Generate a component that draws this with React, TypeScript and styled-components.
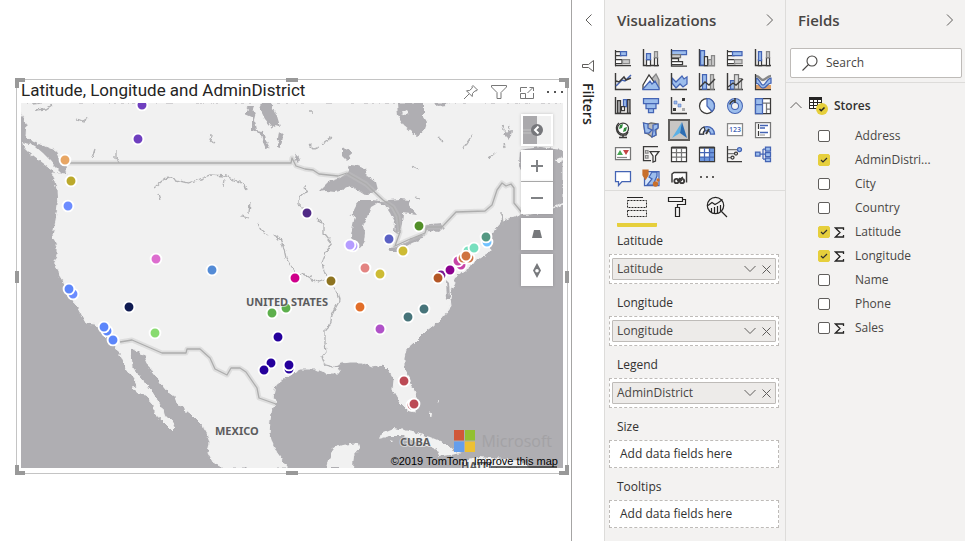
import React from "react";
import styled, { createGlobalStyle, css } from "styled-components";

const GlobalStyle = createGlobalStyle`
  * { box-sizing: border-box; }
  body { margin: 0; background: #fff; color: #323130; font-family: "Open Sans", "Noto Sans", sans-serif; font-size: 12px; }
  button { border: 0; padding: 0; background: none; color: inherit; font: inherit; }
  svg { display: block; flex: none; }
`;

const Page = styled.div`
  display: grid;
  grid-template-columns: minmax(0, 1fr) 33px 181px 180px;
  min-height: 100vh;
`;

/* ---------- report canvas ---------- */

const Canvas = styled.main`
  padding: 79px 3px 20px 16px;
`;
const Visual = styled.section`
  position: relative;
  border: 1px solid #c4c4c4;
  padding: 0 4px 5px;
`;
const VisualHeader = styled.header`
  display: flex;
  align-items: center;
  height: 23px;
`;
const VisualTitle = styled.h1`
  flex: 1;
  margin: 0;
  font: 400 17px/18px Roboto, sans-serif;
  color: #252423;
  white-space: nowrap;
  padding-bottom: 4px;
`;
const HeaderActions = styled.div`
  display: flex;
  gap: 12px;
  color: #777;
`;
const IconButton = styled.button`
  display: flex;
  align-items: center;
  justify-content: center;
  min-width: 16px;
  height: 16px;
`;

type Spot = "tl" | "t" | "tr" | "l" | "r" | "bl" | "b" | "br";
const spots: Record<Spot, ReturnType<typeof css>> = {
  tl: css`top: -2px; left: -2px; width: 10px; height: 10px; border-width: 4px 0 0 4px;`,
  tr: css`top: -2px; right: -2px; width: 10px; height: 10px; border-width: 4px 4px 0 0;`,
  bl: css`bottom: -2px; left: -2px; width: 10px; height: 10px; border-width: 0 0 4px 4px;`,
  br: css`bottom: -2px; right: -2px; width: 10px; height: 10px; border-width: 0 4px 4px 0;`,
  t: css`top: -2px; left: calc(50% - 6px); width: 12px; border-width: 4px 0 0;`,
  b: css`bottom: -2px; left: calc(50% - 6px); width: 12px; border-width: 4px 0 0;`,
  l: css`left: -2px; top: calc(50% - 6px); height: 12px; border-width: 0 0 0 4px;`,
  r: css`right: -2px; top: calc(50% - 6px); height: 12px; border-width: 0 0 0 4px;`,
};
const Handle = styled.span<{ $at: Spot }>`
  position: absolute;
  border: 0 solid #999;
  ${(p) => spots[p.$at]}
`;

const MapArea = styled.div`
  position: relative;
  aspect-ratio: 542 / 365;
  overflow: hidden;
  background: #afaeb2;
`;
const MapSvg = styled.svg`
  width: 100%;
  height: 100%;
`;
const MapControls = styled.div`
  position: absolute;
  top: 11px;
  right: 10px;
  width: 32px;
  display: flex;
  flex-direction: column;
  gap: 4px;
`;
const MapButton = styled.button<{ $divided?: boolean }>`
  display: flex;
  align-items: center;
  justify-content: center;
  width: 32px;
  height: 32px;
  background: #fff;
  box-shadow: 0 0 3px rgba(0, 0, 0, 0.18);
  border-bottom: ${(p) => (p.$divided ? "1px solid #b5b5b5" : "0")};
`;
const ZoomGroup = styled.div`
  display: flex;
  flex-direction: column;
  background: #fff;
`;
const Brand = styled.div`
  position: absolute;
  right: 11px;
  bottom: 16px;
  display: flex;
  align-items: center;
  gap: 6px;
  color: #a3a2a5;
  font-size: 16px;
  line-height: 22px;
`;
const Credits = styled.div`
  position: absolute;
  right: 5px;
  bottom: 0;
  font: 11px/14px "Liberation Sans", sans-serif;
  color: #000;
  white-space: nowrap;
`;
const CreditLink = styled.a`
  color: inherit;
  text-decoration: none;
  margin-left: 6px;
`;

const lakes = [
  "M262 103L271 103 274 110 277 117 280 127 276 126 272 128 270 125 265 119 262 113 260 108Z",
  "M279 131L283 135 282 142 280 148 277 147 278 138Z",
  "M246 106L253 106 252 110 256 112 254 120 256 130 263 131 265 139 270 148 266 149 263 142 261 134 252 130 252 117 245 114 249 110Z",
  "M397 103L424 103 424 117 427 122 425 128 420 134 418 137 412 132 404 125 398 116Z",
  "M434 103L450 103 446 105 438 106Z",
  "M342 149L348 148 351 152 350 158 347 161 342 156Z",
  "M296 152L300 160 298 163 295 160Z",
  "M318 192L328 182 340 178 347 173 350 165 358 166 365 169 367 175 376 182 378 190 371 193 365 195 357 190 350 186 342 190 335 192 326 191Z",
  "M356 206L361 200 372 200 380 201 389 200 400 199 410 200 408 204 411 208 417 215 410 214 403 213 402 224 399 234 394 232 395 222 390 212 386 206 378 203 371 207 367 217 363 225 365 233 364 241 361 246 358 248 354 244 351 236 353 225 355 216 350 217 354 210Z",
  "M388 248L396 247 404 243 414 238 425 234 422 239 412 243 405 247 396 252 390 252Z",
  "M424 226L430 224 442 223 444 228 440 232 427 231Z",
  "M504 132L512 130 511 137 508 139 503 134Z",
  "M520 150L540 147 563 150 563 203 553 207 540 205 530 190 519 166Z",
  "M446 280L449 283 450 297 447 300Z",
];

const islands = [
  "M22 142L30 144 36 147 43 153 50 160 54 165 62 173 54 172 46 166 38 160 30 154 24 148Z",
  "M379 439L383 433 395 428 413 432 430 437 440 441 447 445 453 450 462 453 450 455 437 457 440 452 430 447 420 445 413 440 403 436 390 436Z",
  "M327 468L330 456 333 448 342 445 359 443 360 448 354 455 353 468Z",
  "M468 459L478 457 490 458 505 459 520 461 532 468 478 468 462 466Z",
  "M400 113L407 111 409 114 405 115Z",
  "M430 412L433 416 430 417Z",
  "M390 440L394 441 392 443Z",
  "M555 160L563 156 563 161 557 163Z",
  "M438 399L439 401 438 403Z",
];

const rivers = [
  "M32 104L40 103M36 110L46 109 52 105",
  "M77 119L83 121 88 118M95 149L92 158M116 150L116 158 118 163",
  "M154 188L162 181 169 176 175 180 188 183 200 179 210 175 226 176 236 181 244 184 246 191M224 179L223 187M250 202L249 214M242 216L249 218",
  "M257 223L261 230 268 236M273 235L281 240 284 249 286 258 292 268 297 275 304 274 312 279 319 282 325 280",
  "M305 186L306 192 299 198 299 205 306 210M318 219L324 225 324 234 332 244 326 252 322 262 324 272 329 278 332 286 338 292 340 300 336 307 332 315 330 325 325 330 325 343 326 352 322 357 325 365 333 367",
  "M309 112L314 112M309 144L314 149 319 147M322 144L332 137M211 134L210 140 214 143",
  "M463 149L466 144 473 134M502 125L505 132M510 125L508 131M505 148L504 143M439 138L443 142M489 158L495 153M502 212L503 228",
  "M415 197L420 199M158 194L160 200M412 166L419 169M391 205L394 212 398 225",
];

const usCanada =
  "M68 163L291 163 292 158 296 166 305 169 313 170 319 174 338 176 347 173 366 184 383 200 393 207 398 216 400 232 395 246 408 240 425 233 427 227 442 227 456 212 485 211 492 205 497 190 502 183 506 186 511 184 514 188 514 203 523 214";
const usMexico =
  "M120 342L132 340 162 353 186 353 187 349 200 349 210 358 215 369 227 375 231 368 240 368 246 372 257 388 259 398 276 404";

const land =
  "M21 103L563 103 563 150 563 204 553 208 545 212 530 214 517 215 503 220 496 228 490 235 489 242 491 250 487 253 473 262 470 267 462 272 453 277 455 283 451 291 450 299 451 307 447 312 440 320 427 330 415 342 406 350 404 358 404 366 408 377 415 393 417 402 415 411 407 409 400 402 393 390 394 380 390 372 383 365 372 367 362 362 350 362 342 363 332 367 338 368 340 373 327 373 317 369 300 369 287 376 280 381 275 385 273 395 277 403 272 407 270 420 269 433 272 443 277 453 283 461 288 468 223 468 213 462 208 453 210 443 207 433 202 425 190 413 177 403 175 397 167 391 162 385 157 378 152 372 147 362 145 355 134 349 131 350 132 367 140 377 147 385 152 392 157 400 163 410 165 418 170 418 175 427 172 430 162 420 154 413 154 405 143 393 138 393 132 388 138 387 135 380 126 368 122 358 117 349 110 340 98 328 95 324 86 323 80 312 75 303 72 297 65 285 60 277 59 270 54 262 57 255 57 247 53 236 56 220 58 205 57 190 55 182 52 173 66 174 68 176 66 165 60 158 57 150 50 148 40 144 30 139 26 136 27 125 22 114 21 110Z";

const stops: [number, number, string][] = [
  [142, 105, "#6f3fbf"], [138, 139, "#6f3fbf"], [65, 160, "#e8a664"], [71, 181, "#bba92c"], [68, 206, "#6c8cff"],
  [73, 294, "#6c8cff"], [69, 289, "#5c86fb"], [107, 331, "#5c86fb"], [104, 327, "#5c86fb"], [113, 340, "#5c86fb"],
  [156, 259, "#dd6dcf"], [212, 270, "#548bd6"], [129, 307, "#101b52"], [155, 333, "#89db70"],
  [307, 213, "#502a86"], [353, 246, "#b59cff"], [350, 245, "#b59cff"], [389, 239, "#5b61c4"], [295, 278, "#cf008b"],
  [331, 281, "#8e7421"], [365, 268, "#e38482"], [380, 274, "#cdbb34"], [360, 307, "#e26e29"], [380, 329, "#b052c8"],
  [286, 308, "#5daf4c"], [272, 313, "#5daf4c"], [278, 337, "#25009c"], [271, 363, "#25009c"], [264, 370, "#25009c"],
  [289, 369, "#25009c"], [289, 365, "#25009c"], [412, 405, "#bc4a55"], [414, 404, "#bc4a55"], [404, 381, "#bc4a55"],
  [408, 317, "#47747a"], [424, 309, "#47747a"], [441, 275, "#7a1c92"], [438, 278, "#b45726"], [450, 270, "#8b008f"],
  [461, 265, "#c744a7"], [458, 261, "#c744a7"], [469, 258, "#cf7341"], [463, 258, "#cf7341"], [468, 251, "#77dfbe"],
  [466, 256, "#cf7341"], [474, 248, "#77dfbe"], [487, 242, "#70c2ff"], [486, 237, "#559983"],
  [419, 226, "#528f28"], [403, 251, "#cdbb34"],
];

function StoreMap() {
  return (
    <MapSvg viewBox="21 103 542 365" preserveAspectRatio="xMidYMid slice" role="img" aria-label="Store locations">
      <defs>
        <filter id="coast" x="-5%" y="-5%" width="110%" height="110%" colorInterpolationFilters="sRGB">
          <feTurbulence type="fractalNoise" baseFrequency="0.2" numOctaves="2" seed="4" result="noise" />
          <feDisplacementMap in="SourceGraphic" in2="noise" scale="5" xChannelSelector="R" yChannelSelector="G" />
        </filter>
      </defs>
      <rect x="21" y="103" width="542" height="365" fill="#afaeb2" />
      <g filter="url(#coast)">
        <path d={land} fill="#f1f1f1" stroke="#f1f1f1" strokeWidth="1" />
        {lakes.map((d) => <path key={d} d={d} fill="#afaeb2" />)}
        {islands.map((d) => <path key={d} d={d} fill="#f1f1f1" />)}
        {rivers.map((d) => <path key={d} d={d} fill="none" stroke="#b1b1b3" strokeWidth="1.3" />)}
      </g>
      <path d="M21 103V112M563 103V150" stroke="#f1f1f1" strokeWidth="5" />
      {[usCanada, usMexico].map((d) => (
        <g key={d} fill="none" strokeLinejoin="round">
          <path d={d} stroke="#c4c4c4" strokeOpacity=".4" strokeWidth="5" />
          <path d={d} stroke="#adadad" strokeWidth="1.3" />
        </g>
      ))}
      {stops.map(([x, y, color], i) => (
        <circle key={i} cx={x} cy={y} r="5.4" fill={color} stroke="#fff" strokeWidth="1.9" />
      ))}
      <g fontFamily="Noto Sans, sans-serif" fontSize="11" fontWeight="700" fill="#5c5c5e" stroke="#f1f1f1" strokeOpacity=".6" strokeWidth="2" paintOrder="stroke">
        <text x="246" y="306">UNITED STATES</text>
        <text x="215" y="435">MEXICO</text>
        <text x="400" y="446">CUBA</text>
        <text x="461" y="470">HAITI</text>
      </g>
      <path d="M491 467H557" stroke="#333" strokeWidth="1.5" />
    </MapSvg>
  );
}

/* ---------- side panes ---------- */

const FiltersPane = styled.aside`
  display: flex;
  flex-direction: column;
  align-items: center;
  border-left: 1px solid #a6a5a4;
  padding-top: 12px;
  background: #fff;
`;
const FunnelSlot = styled.span`
  margin-top: 32px;
`;
const FiltersLabel = styled.h2`
  writing-mode: vertical-rl;
  margin: 11px 0 0;
  font-size: 14px;
  line-height: 18px;
  font-weight: 600;
  color: #252423;
`;
const Pane = styled.aside`
  min-width: 0;
  background: #f3f2f1;
  border-left: 1px solid #dddcda;
`;
const PaneHeader = styled.header`
  display: flex;
  align-items: center;
  justify-content: space-between;
  height: 40px;
  padding: 0 8px 0 12px;
`;
const PaneTitle = styled.h2`
  margin: 0;
  font-size: 15px;
  line-height: 20px;
  font-weight: 600;
  color: #484644;
`;
const Gallery = styled.div`
  display: grid;
  grid-template-columns: repeat(6, 28px);
  grid-auto-rows: 24px;
  padding: 6px 4px 0;
`;
const Tile = styled.button<{ $active?: boolean }>`
  place-self: center;
  display: grid;
  place-items: center;
  width: 22px;
  height: 22px;
  ${(p) => p.$active && css`background: #c8c6c4; border: 2px solid #605e5c;`}
`;
const Tabs = styled.nav`
  display: flex;
  border-top: 1px solid #dddcda;
  padding-left: 12px;
`;
const Tab = styled.button<{ $active?: boolean }>`
  width: 40px;
  height: 36px;
  display: grid;
  place-items: center;
  border-bottom: 4px solid ${(p) => (p.$active ? "#e6cf3c" : "transparent")};
  border-radius: 1px;
`;
const Wells = styled.div`
  display: flex;
  flex-direction: column;
  gap: 8px;
  padding: 3px 6px 0 4px;
`;
const WellLabel = styled.h3`
  margin: 0;
  padding: 0 8px 2px;
  font-size: 12px;
  font-weight: 400;
  line-height: 22px;
`;
const DropZone = styled.div`
  border: 1px dashed #bebbb8;
  background: #fff;
  padding: 3px 2px;
`;
const Placeholder = styled.div`
  padding: 0 8px;
  line-height: 20px;
`;
const Pill = styled.div`
  display: flex;
  align-items: center;
  gap: 6px;
  height: 22px;
  padding: 0 4px;
  border: 1px solid #bebbb8;
  border-radius: 1px;
  background: #edebe9;
  color: #605e5c;
`;
const PillText = styled.span`
  flex: 1;
  line-height: 20px;
  color: #484644;
`;
const PillButton = styled.button`
  display: grid;
  place-items: center;
`;
const SearchBox = styled.label`
  display: flex;
  align-items: center;
  gap: 8px;
  height: 30px;
  margin: 8px 3px 4px 4px;
  padding: 0 11px;
  background: #fff;
  border: 1px solid #bebbb8;
  border-radius: 2px;
`;
const SearchInput = styled.input`
  min-width: 0;
  flex: 1;
  border: 0;
  padding: 0;
  outline: 0;
  background: none;
  font: 12px/18px "Open Sans", sans-serif;
  color: #323130;
  &::placeholder { color: #484644; opacity: 1; }
`;
const TableButton = styled.button`
  display: flex;
  align-items: center;
  gap: 6px;
  height: 24px;
  padding-left: 4px;
  font-weight: 600;
`;
const FieldTree = styled.section`
  border-top: 1px solid #dddcda;
  padding-top: 10px;
`;
const FieldList = styled.ul`
  list-style: none;
  margin: 7px 0 0;
  padding: 0 0 0 32px;
`;
const FieldRow = styled.label`
  display: grid;
  grid-template-columns: 12px 11px minmax(0, 1fr);
  column-gap: 4px;
  align-items: center;
  height: 24px;
`;
const FieldName = styled.span`
  padding-left: 6px;
  line-height: 20px;
  color: #484644;
`;
const CheckWrap = styled.span`
  position: relative;
  width: 12px;
  height: 12px;
`;
const Check = styled.input`
  appearance: none;
  display: block;
  width: 12px;
  height: 12px;
  margin: 0;
  background: #fff;
  border: 1px solid #605e5c;
  border-radius: 2px;
  &:checked { background: #e6cf3c; border-color: #e6cf3c; }
  & + svg { position: absolute; top: 0; left: 0; pointer-events: none; visibility: hidden; }
  &:checked + svg { visibility: visible; }
`;

/* ---------- icons ---------- */

const K = "#3b3a39";
const B = "#9cbdec";
const D = "#4464b4";
const G = "#a5a5a5";

function Chevron({ d, w = 9, h = 14 }: { d: string; w?: number; h?: number }) {
  return (
    <svg width={w} height={h} viewBox={`0 0 ${w} ${h}`} fill="none" stroke="#605e5c" strokeWidth="1">
      <path d={d} />
    </svg>
  );
}

const axis = <path d="M1.5 0V16.5H17" stroke={K} strokeWidth="1.4" />;

const gallery: [string, React.ReactNode][] = [
  ["Stacked bar chart", <><path d="M1.5 1V17M1 16.5H2" stroke={K} /><path d="M2 2.5H7V6.5H2" stroke={K} /><path d="M6.5 2.5H12.5V6.5H6.5Z" fill={B} stroke={D} /><path d="M2 10.5H8V14.5H2M1 16.5H17" stroke={K} fill="#fff" /><path d="M8.5 10.5H15.5V14.5H8.5Z" fill="#ccc" stroke="#888" /></>],
  ["Stacked column chart", <>{axis}<path d="M4.5 10.5H8.5V16.5H4.5Z" fill="#fff" stroke={K} /><path d="M4.5 4.5H8.5V10.5H4.5Z" fill={B} stroke={D} /><path d="M12.5 8.5H15.5V16.5H12.5Z" fill="#fff" stroke={K} /><path d="M12.5 2.5H15.5V8.5H12.5Z" fill="#ccc" stroke="#888" /></>],
  ["Clustered bar chart", <><path d="M1.5 1.5H16.5V5.5H1.5Z" fill={B} stroke={D} /><path d="M1.5 5.5H10.5V8.5H1.5Z" fill="#ccc" stroke="#777" /><path d="M1.5 9.5H8.5V12.5H1.5M1.5 12.5H12.5V15.5H1.5" fill="#fff" stroke={K} /><path d="M1.5 0V17H17" stroke={K} /></>],
  ["Clustered column chart", <>{axis}<path d="M2.5 1.5H6.5V16H2.5Z" fill={B} stroke={D} /><path d="M6.5 7.5H9.5V16.5H6.5Z" fill="#fff" stroke={K} /><path d="M10.5 10.5H13.5V16.5H10.5ZM13.5 6.5H16.5V16.5H13.5Z" fill="#ccc" stroke="#888" /></>],
  ["100% stacked bar chart", <><path d="M1.5 1V16.5H17" stroke={K} /><path d="M2 2.5H8V6.5H2M2 10.5H9V14.5H2" stroke={K} fill="#fff" /><path d="M6.5 2.5H16V6.5H6.5Z" fill={B} stroke={D} /><path d="M8.5 10.5H16V14.5H8.5Z" fill="#ccc" stroke="#888" /></>],
  ["100% stacked column chart", <>{axis}<path d="M4.5 10.5H7.5V16.5H4.5ZM12.5 8.5H15.5V16.5H12.5Z" fill="#fff" stroke={K} /><path d="M4.5 2.5H7.5V11.5H4.5Z" fill={B} stroke={D} /><path d="M12.5 2.5H15.5V8.5H12.5Z" fill="#ccc" stroke="#888" /></>],
  ["Line chart", <>{axis}<path d="M2 13L8 7 11 8 17 2" stroke={D} strokeWidth="1.5" /><path d="M2 8L5 9 10 4 12 7 17 5" stroke={K} strokeWidth="1.5" /></>],
  ["Area chart", <><path d="M8 8L14 1 17 7V16H10Z" fill="#bbb" stroke="#888" /><path d="M1 12L7 2 12 9 8 16H1Z" fill="#fff" stroke={K} /><path d="M1 16L8 8 10 11 13 8 17 15V16.5H1Z" fill={B} stroke={D} /></>],
  ["Stacked area chart", <><path d="M2 5L6 9 12 3 14 6 17 4V11L13 14 10 11 6 15 2 10Z" fill={B} stroke={D} />{axis}</>],
  ["Line and stacked column chart", <>{axis}<path d="M4.5 1.5H8.5V16H4.5Z" fill={B} stroke={D} /><path d="M12.5 1.5H15.5V16H12.5Z" fill="#ccc" stroke="#888" /><path d="M2 14L7 9 11 12 17 6" stroke={K} strokeWidth="1.4" /></>],
  ["Line and clustered column chart", <>{axis}<path d="M4.5 7.5H8.5V16H4.5Z" fill={B} stroke={D} /><path d="M8.5 1.5H12.5V16H8.5ZM12.5 5.5H15.5V16H12.5Z" fill="#ddd" stroke="#777" /><path d="M2 14L7 10 10 12 17 6" stroke={K} strokeWidth="1.4" /></>],
  ["Ribbon chart", <><path d="M2 13H6M12 13H17M2 15H17" stroke="#d8863c" strokeWidth="1.6" /><path d="M2 5C6 5 6 12 9 12S13 5 17 5V10C13 10 13 15 9 15S6 10 2 10Z" fill={B} stroke={D} /><path d="M2 3C6 3 6 7 9 7S13 3 17 3" stroke="#888" strokeWidth="2.4" /><path d="M1.5 1V16.5H17" stroke={K} /></>],
  ["Waterfall chart", <>{axis}<path d="M3.5 3.5H6.5V16H3.5ZM13.5 2.5H16V16H13.5Z" fill="#aaa" stroke={K} /><path d="M9.5 2.5H12.5V9.5H9.5Z" fill={B} stroke={D} /><path d="M7.5 9.5H10.5V13.5H7.5Z" fill="#fff" stroke={K} /></>],
  ["Funnel chart", <><path d="M1.5 1.5H16.5V6.5H1.5ZM4 6.5H14V11.5H4ZM6.5 11.5H11.5V15.5H6.5Z" fill={B} stroke={D} /></>],
  ["Scatter chart", <>{axis}<path d="M12 1H15V4H12ZM3 11H6V14H3Z" fill={K} /><path d="M4 4H7V7H4ZM8 7H11V10H8Z" fill={B} stroke={D} strokeWidth=".5" /><path d="M12 11H15V14H12Z" fill="#aaa" /></>],
  ["Pie chart", <><circle cx="9" cy="9" r="7.5" fill="#fff" stroke={K} /><path d="M9 9V1.5A7.5 7.5 0 0 1 14 14.5Z" fill={B} stroke={D} /></>],
  ["Donut chart", <><circle cx="9" cy="9" r="5.5" stroke={D} strokeWidth="5" /><circle cx="9" cy="9" r="5.5" stroke={B} strokeWidth="3" /><path d="M9 1V6M9 3.5A5.5 5.5 0 0 0 3.8 7.5" stroke={K} strokeWidth="1.5" /></>],
  ["Treemap", <><path d="M1.5 1.5H16.5V16.5H1.5Z" fill="#fff" stroke={K} /><path d="M1.5 1.5H8.5V7.5H1.5ZM1.5 7.5H8.5V16.5H1.5Z" fill={B} stroke={D} /><path d="M8.5 6H16M12.5 6V16M12.5 12H16" stroke="#777" /></>],
  ["Map", <><circle cx="9" cy="7.5" r="5.5" fill="#fff" stroke={K} /><path d="M6 4L9 3 8 7 5 8ZM10 7L13 6 12 10 9 11Z" fill="#2f8a3b" /><path d="M5 2C1 5 2 12 7 14H12L14 11M9 14V16.5M5 16.5H13" stroke={K} strokeWidth="1.5" /></>],
  ["Filled map", <><path d="M1.5 2L6 3 9 2 16 3V7L14 9V14L10 16 6 13 3 12Z" fill="#bbb" stroke="#666" /><path d="M1.5 2L6 3V7L10 9 7 12 3 12ZM11 4L16 3V7L13 9 14 14 10 16 11 10Z" fill={B} stroke={D} /></>],
  ["ArcGIS Maps", <><path d="M12 1L2 17 10 12Z" fill="#59b0e6" /><path d="M12 1L17 17 10 12Z" fill="#2c6db3" /></>],
  ["Gauge", <><path d="M1.5 13A7.5 7.5 0 0 1 16.5 13H12.5A3.5 3.5 0 0 0 5.5 13Z" fill={B} stroke={D} /><path d="M1.5 13A7.5 7.5 0 0 1 6 6L7 9A4 4 0 0 0 5.5 13Z" fill="#fff" stroke={K} /><path d="M8 13L11 8" stroke={K} strokeWidth="2" /></>],
  ["Card", <><path d="M1.5 2.5H16.5V14.5H1.5Z" fill="#fff" stroke="#888" /><text x="3" y="11" fontSize="7" fontWeight="600" fontFamily="Open Sans" fill={D} stroke="none">123</text></>],
  ["Multi-row card", <><path d="M1.5 1.5H16.5V16.5H1.5Z" fill="#fff" stroke="#777" /><path d="M4.5 3V8M4.5 10V15" stroke={K} /><path d="M6 4.5H14M6 7H11M6 11.5H14" stroke={D} strokeWidth="1.3" /><path d="M6 14H11" stroke={G} /></>],
  ["KPI", <><path d="M1.5 2.5H16.5V14.5H1.5Z" fill="#fff" stroke="#777" /><path d="M3 10L6 5 9 10Z" fill="#4aa655" /><path d="M9 5H15L12 10Z" fill="#c44545" /><path d="M3 12.5H13" stroke="#888" /></>],
  ["Slicer", <><path d="M1 1.5H16M1.5 1V15.5H9" stroke={K} /><path d="M3.5 5.5H6V8H3.5ZM3.5 10.5H6V13H3.5Z" stroke="#888" /><path d="M8 6.5H17L13.5 11V16L11 17V11Z" fill="#fff" stroke={K} /></>],
  ["Table", <><path d="M1.5 2.5H16.5V16.5H1.5Z" fill="#fff" stroke={K} /><path d="M1.5 2.5H16.5" stroke={K} strokeWidth="2" /><path d="M6.5 3V16M11.5 3V16M2 7.5H16M2 12H16" stroke="#777" /></>],
  ["Matrix", <><path d="M1.5 2.5H16.5V16.5H1.5Z" fill="#fff" stroke={K} /><path d="M11.5 3H16V16H2V12H11Z" fill="#6f98dd" /><path d="M1.5 2.5H16.5" stroke={K} strokeWidth="2" /><path d="M6.5 3V16M11.5 3V16M2 7.5H16M2 12H16" stroke={D} /></>],
  ["Key influencers", <><path d="M1.5 1V16.5H16" stroke={K} /><path d="M2 4.5H12M2 8.5H8M2 12.5H5" stroke="#777" /><circle cx="13.5" cy="4.5" r="2" fill={B} stroke={D} /><circle cx="10" cy="8.5" r="1.5" stroke={K} /><circle cx="6.5" cy="12.5" r="1.5" stroke={K} /></>],
  ["Decomposition tree", <><path d="M6 9H11M9 4V14M9 4H11M9 14H11" stroke={D} /><path d="M1.5 7H6V11H1.5Z" fill={B} stroke={D} /><path d="M11.5 2H16.5V6H11.5ZM11.5 7.5H16.5V11.5H11.5ZM11.5 13H16.5V16.5H11.5Z" fill={B} stroke={D} /></>],
  ["Q&A", <><path d="M1.5 2.5H16.5V12.5H8L4.5 16.5V12.5H1.5Z" fill="#fff" stroke={D} /></>],
  ["Map layers", <><path d="M2.5 2.5H17V16.5H2.5Z" fill="#d7e6fa" stroke={D} /><path d="M10 3L7 8 10 10 5 16H11L15 7V3Z" fill={B} stroke={D} /><path d="M1 1H6V6L3.5 10 1 6Z" fill="#c86f2c" stroke="#c86f2c" /><circle cx="13.5" cy="15" r="2.7" fill="#c86f2c" /><circle cx="16" cy="11" r="1.7" fill="#c86f2c" /></>],
  ["Custom visual", <><path d="M2 13.5V5L4 3.5H16.5V13.5" fill="#fff" stroke={K} strokeWidth="1.5" /><circle cx="6.5" cy="12" r="2.2" stroke={K} strokeWidth="1.8" /><circle cx="12" cy="12" r="2.2" stroke={K} strokeWidth="1.8" /><path d="M7 12L13 8M12 12L9 9" stroke={K} /></>],
  ["More visuals", <path d="M2 7H4V9H2ZM8 7H10V9H8ZM14 7H16V9H14Z" fill="#605e5c" />],
];

const wells: { label: string; value?: string }[] = [
  { label: "Latitude", value: "Latitude" },
  { label: "Longitude", value: "Longitude" },
  { label: "Legend", value: "AdminDistrict" },
  { label: "Size" },
  { label: "Tooltips" },
];

const fields: { name: string; checked?: boolean; sum?: boolean }[] = [
  { name: "Address" },
  { name: "AdminDistri...", checked: true },
  { name: "City" },
  { name: "Country" },
  { name: "Latitude", checked: true, sum: true },
  { name: "Longitude", checked: true, sum: true },
  { name: "Name" },
  { name: "Phone" },
  { name: "Sales", sum: true },
];

export default function App() {
  return (
    <Page>
      <GlobalStyle />
      <Canvas>
        <Visual>
          <VisualHeader>
            <VisualTitle>Latitude, Longitude and AdminDistrict</VisualTitle>
            <HeaderActions>
              <IconButton aria-label="Pin visual">
                <svg width="16" height="16" viewBox="0 0 16 16" fill="none" stroke="currentColor"><path d="M10 1.5L14.5 6 13 7 12 6.8 9.5 9.5 9.2 12.5 3.5 6.8 6.5 6.5 9.3 4 9 2.7ZM6 10L1 15" /></svg>
              </IconButton>
              <IconButton aria-label="Filters on visual">
                <svg width="16" height="16" viewBox="0 0 16 16" fill="none" stroke="currentColor"><path d="M.5 1.5H15.5V3L10 8.5V14.5H6V8.5L.5 3Z" /></svg>
              </IconButton>
              <IconButton aria-label="Focus mode">
                <svg width="16" height="16" viewBox="0 0 16 16" fill="none" stroke="currentColor"><path d="M1.5 8V3.5H8M14.5 9V14.5H1.5V9.5H6.5V14M8.5 9L14 3.5M10.5 3.5H14.5V7" /></svg>
              </IconButton>
              <IconButton aria-label="More options">
                <svg width="16" height="16" viewBox="0 0 16 16" fill="#555"><path d="M0 7H2V9H0ZM7 7H9V9H7ZM14 7H16V9H14Z" /></svg>
              </IconButton>
            </HeaderActions>
          </VisualHeader>
          <MapArea>
            <StoreMap />
            <MapControls>
              <MapButton aria-label="Map style">
                <svg width="28" height="28" viewBox="0 0 28 28"><path d="M0 0H14V28H0Z" fill="#aaa9ac" /><path d="M14 0H28V28H14Z" fill="#f1f1f1" /><path d="M0 14H8M0 17H8" stroke="#c4c4c4" /><circle cx="14" cy="14" r="6" fill="#76777b" /><path d="M15.5 10.5L12 14 15.5 17.5" fill="none" stroke="#fff" strokeWidth="2" /></svg>
              </MapButton>
              <ZoomGroup>
                <MapButton $divided aria-label="Zoom in">
                  <svg width="12" height="12" viewBox="0 0 12 12" stroke="#808285" strokeWidth="2"><path d="M0 6H12M6 0V12" /></svg>
                </MapButton>
                <MapButton aria-label="Zoom out">
                  <svg width="12" height="12" viewBox="0 0 12 12" stroke="#808285" strokeWidth="2"><path d="M0 6H12" /></svg>
                </MapButton>
              </ZoomGroup>
              <MapButton aria-label="Pitch">
                <svg width="10" height="8" viewBox="0 0 10 8" fill="#77797c"><path d="M2 0H8L10 8H0Z" /></svg>
              </MapButton>
              <MapButton aria-label="Reset north">
                <svg width="8" height="15" viewBox="0 0 8 15" fill="#77797c"><path fillRule="evenodd" d="M4 0L8 7.5 4 15 0 7.5ZM4 6A1.8 1.8 0 1 0 4 9.6 1.8 1.8 0 1 0 4 6Z" /></svg>
              </MapButton>
            </MapControls>
            <Brand>
              <svg width="21" height="22" viewBox="0 0 21 22"><path d="M0 0H10V10.5H0Z" fill="#d15838" /><path d="M11 0H21V10.5H11Z" fill="#92c031" /><path d="M0 11.5H10V22H0Z" fill="#659eec" /><path d="M11 11.5H21V22H11Z" fill="#edc033" /></svg>
              Microsoft
            </Brand>
            <Credits>©2019 TomTom<CreditLink href="#improve">Improve this map</CreditLink></Credits>
          </MapArea>
          {(Object.keys(spots) as Spot[]).map((s) => <Handle key={s} $at={s} />)}
        </Visual>
      </Canvas>

      <FiltersPane>
        <IconButton aria-label="Expand filters"><Chevron d="M7.5 1.5L2 7 7.5 12.5" /></IconButton>
        <FunnelSlot>
          <svg width="12" height="12" viewBox="0 0 12 12" fill="none" stroke="#605e5c"><path d="M11.5 .5V11.5L6.5 7.5H.5V4.5H6.5Z" /></svg>
        </FunnelSlot>
        <FiltersLabel>Filters</FiltersLabel>
      </FiltersPane>

      <Pane>
        <PaneHeader>
          <PaneTitle>Visualizations</PaneTitle>
          <IconButton aria-label="Collapse visualizations"><Chevron d="M2 1.5L7.5 7 2 12.5" /></IconButton>
        </PaneHeader>
        <Gallery>
          {gallery.map(([name, art]) => (
            <Tile key={name} aria-label={name} $active={name === "ArcGIS Maps"}>
              <svg width="18" height="18" viewBox="0 0 18 18" fill="none" strokeWidth="1.25">{art}</svg>
            </Tile>
          ))}
        </Gallery>
        <Tabs>
          <Tab $active aria-label="Fields">
            <svg width="22" height="22" viewBox="0 0 22 22" fill="none" stroke="#252423"><path d="M1 1.5H17" /><path d="M1.5 4.5H20.5V11.5H1.5ZM1.5 14.5H20.5V20.5H1.5Z" strokeDasharray="2 1" /></svg>
          </Tab>
          <Tab aria-label="Format">
            <svg width="20" height="22" viewBox="0 0 20 22" fill="none" stroke="#252423" strokeWidth="1.2"><path d="M1.5 1.5H15.5V5.5H1.5ZM15.5 3.5H18.5V8.5H10.5V11.5M8.5 11.5H12.5V20.5H8.5Z" /></svg>
          </Tab>
          <Tab aria-label="Analytics">
            <svg width="22" height="22" viewBox="0 0 22 22" fill="none" stroke="#252423" strokeWidth="1.2"><circle cx="9.5" cy="9.5" r="8.2" /><path d="M15.5 15.5L21 21M2 9.5L6 6.5 9 8.5 12.5 6.5 16.5 3.5M5.5 12V16M8.5 11V17M11.5 10V17M14.5 9V15" /></svg>
          </Tab>
        </Tabs>
        <Wells>
          {wells.map((w) => (
            <section key={w.label}>
              <WellLabel>{w.label}</WellLabel>
              <DropZone>
                {w.value ? (
                  <Pill>
                    <PillText>{w.value}</PillText>
                    <PillButton aria-label={`${w.value} options`}><Chevron w={12} h={8} d="M.5 1L6 6.5 11.5 1" /></PillButton>
                    <PillButton aria-label={`Remove ${w.value}`}><Chevron w={9} h={9} d="M.5 .5L8.5 8.5M8.5 .5L.5 8.5" /></PillButton>
                  </Pill>
                ) : (
                  <Placeholder>Add data fields here</Placeholder>
                )}
              </DropZone>
            </section>
          ))}
        </Wells>
      </Pane>

      <Pane>
        <PaneHeader>
          <PaneTitle>Fields</PaneTitle>
          <IconButton aria-label="Collapse fields"><Chevron d="M2 1.5L7.5 7 2 12.5" /></IconButton>
        </PaneHeader>
        <SearchBox>
          <svg width="16" height="16" viewBox="0 0 16 16" fill="none" stroke="#484644" strokeWidth="1.1"><circle cx="10" cy="6" r="5" /><path d="M6.5 9.5L.5 15.5" /></svg>
          <SearchInput type="search" placeholder="Search" aria-label="Search fields" />
        </SearchBox>
        <FieldTree>
          <TableButton aria-expanded="true">
            <Chevron w={12} h={8} d="M.5 7L6 1.5 11.5 7" />
            <svg width="20" height="20" viewBox="0 0 20 20">
              <path d="M1 2H14V14H1Z" fill="#252423" /><path d="M2 5H5V7H2ZM6 5H9V7H6ZM10 5H13V7H10ZM2 8H5V10H2ZM6 8H9V10H6ZM10 8H13V10H10ZM2 11H5V13H2ZM6 11H9V13H6Z" fill="#fff" />
              <circle cx="14" cy="14" r="6" fill="#e6cf3c" /><path d="M11.5 14L13.2 15.7 16.5 12.5" fill="none" stroke="#252423" strokeWidth="1.6" />
            </svg>
            Stores
          </TableButton>
          <FieldList>
            {fields.map((f) => (
              <li key={f.name}>
                <FieldRow>
                  <CheckWrap>
                    <Check type="checkbox" defaultChecked={f.checked} />
                    <svg width="12" height="12" viewBox="0 0 12 12" fill="none" stroke="#323130" strokeWidth="1.2"><path d="M3 6L5 8 9 4" /></svg>
                  </CheckWrap>
                  <svg width="11" height="11" viewBox="0 0 11 11" fill="none" stroke="#252423" strokeWidth="1.3">{f.sum && <path d="M9.5 3V1H1.5L6 5.5 1.5 10H9.5V8" />}</svg>
                  <FieldName>{f.name}</FieldName>
                </FieldRow>
              </li>
            ))}
          </FieldList>
        </FieldTree>
      </Pane>
    </Page>
  );
}
